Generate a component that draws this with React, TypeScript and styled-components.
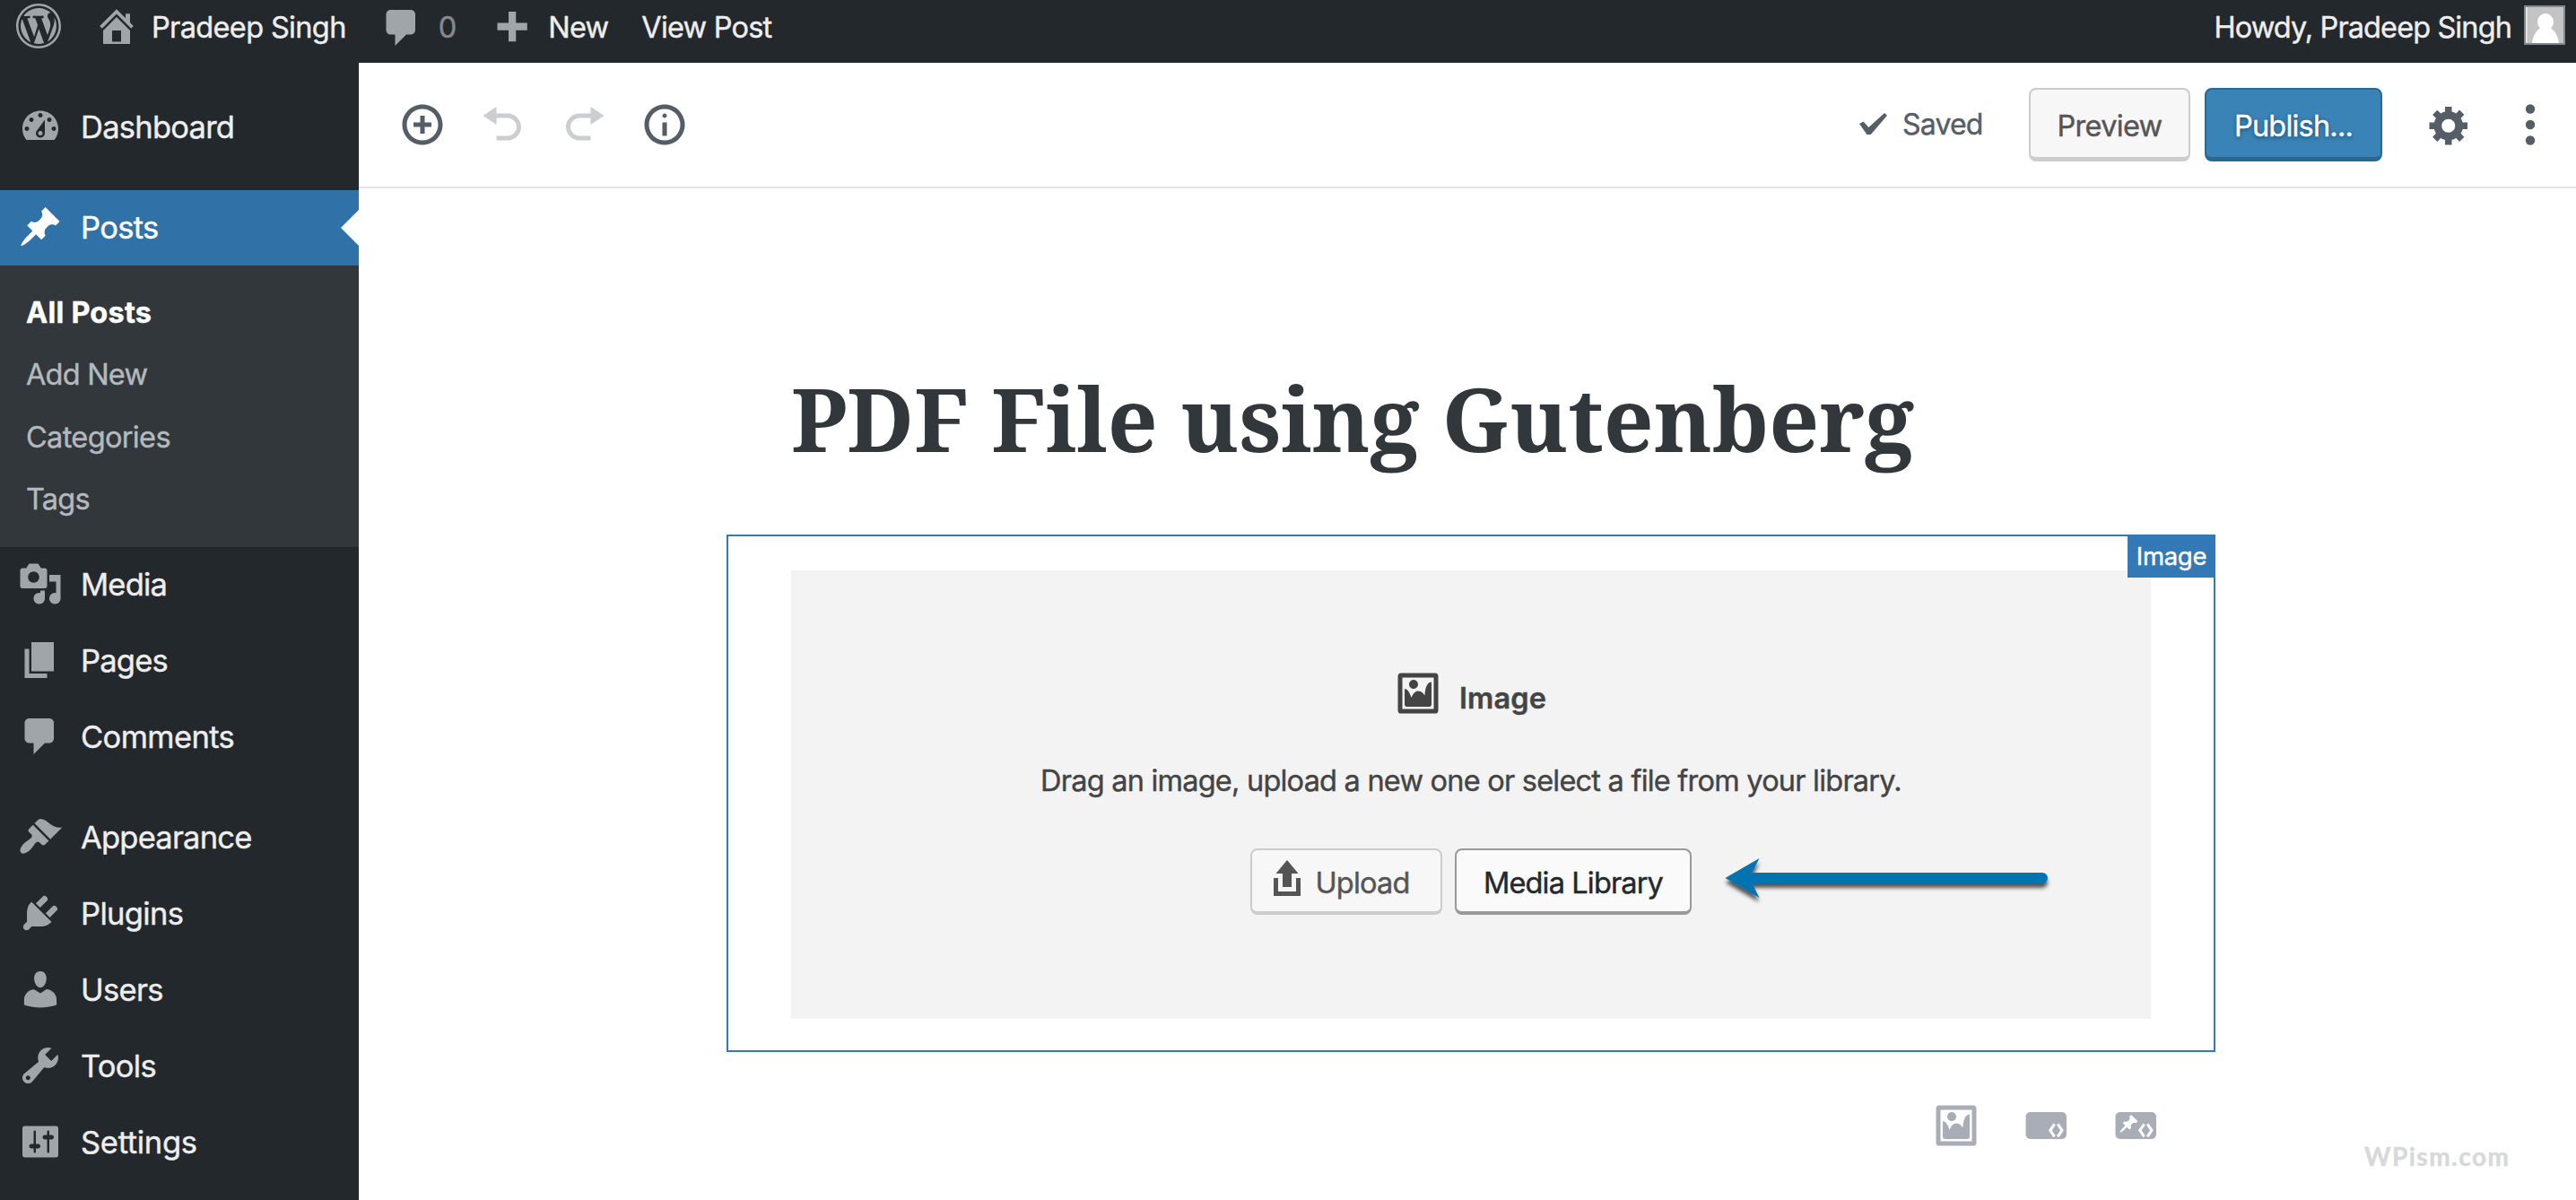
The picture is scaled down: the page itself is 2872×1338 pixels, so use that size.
import styled, { createGlobalStyle } from "styled-components";

const GlobalStyle = createGlobalStyle`
  * {
    box-sizing: border-box;
  }
  body {
    margin: 0;
    background: #fff;
    font-family: Inter, "Liberation Sans", sans-serif;
    overflow: hidden;
  }
`;

const icons = {
  wordpress:
    "M20 10c0-5.52-4.48-10-10-10S0 4.48 0 10s4.48 10 10 10 10-4.48 10-10zM10 1.01c4.97 0 8.99 4.02 8.99 8.99s-4.02 8.99-8.99 8.99S1.01 14.97 1.01 10 5.03 1.01 10 1.01zM8.01 14.82L4.96 6.61c.49-.03 1.05-.08 1.05-.08.43-.05.38-1.01-.06-.99 0 0-1.29.1-2.13.1-.15 0-.33 0-.52-.01 1.44-2.17 3.9-3.6 6.7-3.6 2.09 0 3.99.79 5.41 2.09-.6-.08-1.45.35-1.45 1.42 0 .66.38 1.22.79 1.88.31.54.5 1.22.5 2.21 0 1.34-1.27 4.48-1.27 4.48l-2.71-7.5c.48-.03.75-.16.75-.16.43-.05.38-1.1-.05-1.08 0 0-1.3.11-2.14.11-.78 0-2.11-.11-2.11-.11-.43-.02-.48 1.06-.05 1.08l.84.08 1.12 3.04zm6.02 2.15L16.64 10s.67-1.69.39-3.81c.63 1.14.94 2.42.94 3.81 0 2.96-1.56 5.58-3.94 6.97zM2.68 6.77L6.5 17.25c-2.67-1.3-4.47-4.08-4.47-7.25 0-1.16.2-2.23.65-3.23zm7.45 4.53l2.29 6.25c-.75.27-1.57.42-2.42.42-.72 0-1.41-.11-2.06-.3z",
  home: "M16 8.5l1.53 1.53-1.06 1.06L10 4.6l-6.47 6.49-1.06-1.06L10 2.5l4 4v-2h2v4zm-6-2.46l6 5.99V18H4v-5.97zM12 17v-5H8v5h4z",
  comments:
    "M5 2h9c1.1 0 2 .9 2 2v7c0 1.1-.9 2-2 2h-2l-5 5v-5H5c-1.1 0-2-.9-2-2V4c0-1.1.9-2 2-2z",
  plus: "M8.4 3.6h3.3v5h5v3.3h-5v5H8.4v-5h-5V8.6h5z",
  dashboard:
    "M3.76 16h12.48c1.1-1.37 1.76-3.11 1.76-5 0-4.42-3.58-8-8-8s-8 3.58-8 8c0 1.89.66 3.63 1.76 5zM10 4c.55 0 1 .45 1 1s-.45 1-1 1-1-.45-1-1 .45-1 1-1zM6 6c.55 0 1 .45 1 1s-.45 1-1 1-1-.45-1-1 .45-1 1-1zm8 0c.55 0 1 .45 1 1s-.45 1-1 1-1-.45-1-1 .45-1 1-1zm-5.37 5.55L12 7v6c0 1.1-.9 2-2 2s-2-.9-2-2c0-.57.24-1.08.63-1.45zM4 10c.55 0 1 .45 1 1s-.45 1-1 1-1-.45-1-1 .45-1 1-1zm12 0c.55 0 1 .45 1 1s-.45 1-1 1-1-.45-1-1 .45-1 1-1zm-5 3c0-.55-.45-1-1-1s-1 .45-1 1 .45 1 1 1 1-.45 1-1z",
  pin: "M10.44 3.02l1.82-1.82 6.36 6.35-1.83 1.82c-1.05-.68-2.48-.57-3.41.36l-.75.75c-.92.93-1.04 2.35-.35 3.41l-1.83 1.82-2.41-2.41-2.8 2.79c-.42.42-3.38 2.71-3.8 2.29s1.86-3.39 2.28-3.81l2.79-2.79L4.1 9.36l1.83-1.82c1.05.69 2.48.57 3.4-.36l.75-.75c.93-.92 1.05-2.35.36-3.41z",
  media:
    "M13 11V4c0-.55-.45-1-1-1h-1.67L9 1H5L3.67 3H2c-.55 0-1 .45-1 1v7c0 .55.45 1 1 1h10c.55 0 1-.45 1-1zM7 4.5c1.38 0 2.5 1.12 2.5 2.5S8.38 9.5 7 9.5 4.5 8.38 4.5 7 5.62 4.5 7 4.5zM14 6h5v10.5c0 1.38-1.12 2.5-2.5 2.5S14 17.88 14 16.5s1.12-2.5 2.5-2.5c.17 0 .34.02.5.05V9h-3V6zm-4 8.05V13h2v3.5c0 1.38-1.12 2.5-2.5 2.5S7 17.88 7 16.5 8.12 14 9.5 14c.17 0 .34.02.5.05z",
  page: "M6 15V2h10v13H6zm-1 1h8v2H3V5h2v11z",
  appearance:
    "M14.48 11.06L7.41 3.99l1.5-1.5c.5-.56 2.3-.47 3.51.32 1.21.8 1.43 1.28 2.91 2.1 1.18.64 2.45 1.26 4.45.85zm-.71.71L6.7 4.7 4.93 6.47c-.39.39-.39 1.02 0 1.41l1.06 1.06c.39.39.39 1.03 0 1.42-.6.6-1.43 1.11-2.21 1.69-.35.26-.7.53-1.01.84C1.43 14.23.4 16.08 1.4 17.07c.99 1 2.84-.03 4.18-1.36.31-.31.58-.66.85-1.02.57-.78 1.08-1.61 1.69-2.21.39-.39 1.02-.39 1.41 0l1.06 1.06c.39.39 1.02.39 1.41 0z",
  plugins:
    "M13.11 4.36L9.87 7.6 8 5.73l3.24-3.24c.35-.34 1.05-.2 1.56.32.52.51.66 1.21.31 1.55zm-8 1.77l.91-1.12 9.01 9.01-1.19.84c-.71.71-2.63 1.16-3.82 1.16H6.14L4.9 17.26c-.59.59-1.54.59-2.12 0-.59-.58-.59-1.53 0-2.12l1.24-1.24v-3.88c0-1.13.4-3.19 1.09-3.89zm7.26 3.97l3.24-3.24c.34-.35 1.04-.21 1.55.31.52.51.66 1.21.31 1.55l-3.24 3.25z",
  users:
    "M10 9.25c-2.27 0-2.73-3.44-2.73-3.44C7 4.02 7.82 2 9.97 2c2.16 0 2.98 2.02 2.71 3.81 0 0-.41 3.44-2.68 3.44zm0 2.57L12.72 10c2.39 0 4.52 2.33 4.52 4.53v2.49s-3.65 1.13-7.24 1.13c-3.65 0-7.24-1.13-7.24-1.13v-2.49c0-2.25 1.94-4.48 4.47-4.48z",
  tools:
    "M16.68 9.77c-1.34 1.34-3.3 1.67-4.95.99l-5.41 6.52c-.99.99-2.59.99-3.58 0s-.99-2.59 0-3.57l6.52-5.42c-.68-1.65-.35-3.61.99-4.95 1.28-1.28 3.12-1.62 4.72-1.06l-2.89 2.89 2.82 2.82 2.86-2.87c.53 1.58.18 3.39-1.08 4.65zM3.81 16.21c.4.39 1.04.39 1.43 0 .4-.4.4-1.04 0-1.43-.39-.4-1.03-.4-1.43 0-.39.39-.39 1.03 0 1.43z",
  settings:
    "M18 16V4c0-.55-.45-1-1-1H3c-.55 0-1 .45-1 1v12c0 .55.45 1 1 1h14c.55 0 1-.45 1-1zM8 11h1c.55 0 1 .45 1 1s-.45 1-1 1H8v1.5c0 .28-.22.5-.5.5s-.5-.22-.5-.5V13H6c-.55 0-1-.45-1-1s.45-1 1-1h1V5.5c0-.28.22-.5.5-.5s.5.22.5.5V11zm5-2h-1c-.55 0-1-.45-1-1s.45-1 1-1h1V5.5c0-.28.22-.5.5-.5s.5.22.5.5V7h1c.55 0 1 .45 1 1s-.45 1-1 1h-1v5.5c0 .28-.22.5-.5.5s-.5-.22-.5-.5V9z",
  insert:
    "M10 1c-5 0-9 4-9 9s4 9 9 9 9-4 9-9-4-9-9-9zm0 16c-3.9 0-7-3.1-7-7s3.1-7 7-7 7 3.1 7 7-3.1 7-7 7zm1-11H9v3H6v2h3v3h2v-3h3V9h-3V6z",
  undo: "M12 5H7V2L1 6l6 4V7h5c2.2 0 4 1.8 4 4s-1.8 4-4 4H7v2h5c3.3 0 6-2.7 6-6s-2.7-6-6-6z",
  redo: "M8 5h5V2l6 4-6 4V7H8c-2.2 0-4 1.8-4 4s1.8 4 4 4h5v2H8c-3.3 0-6-2.7-6-6s2.7-6 6-6z",
  info: "M9 15h2V9H9v6zm1-10c-.5 0-1 .5-1 1s.5 1 1 1 1-.5 1-1-.5-1-1-1zm0-4c-5 0-9 4-9 9s4 9 9 9 9-4 9-9-4-9-9-9zm0 16c-3.9 0-7-3.1-7-7s3.1-7 7-7 7 3.1 7 7-3.1 7-7 7z",
  gear: "M18 12h-2.18c-.17.7-.44 1.35-.81 1.93l1.54 1.54-2.1 2.1-1.54-1.54c-.58.36-1.23.63-1.91.79V19H8v-2.18c-.68-.16-1.33-.43-1.91-.79l-1.54 1.54-2.12-2.12 1.54-1.54c-.36-.58-.63-1.23-.79-1.91H1V9.03h2.17c.16-.7.44-1.35.8-1.94L2.43 5.55l2.1-2.1 1.54 1.54c.58-.37 1.24-.64 1.93-.81V2h3v2.18c.68.16 1.33.43 1.91.79l1.54-1.54 2.12 2.12-1.54 1.54c.36.59.64 1.24.8 1.94H18V12zm-8.5 1.5c1.66 0 3-1.34 3-3s-1.34-3-3-3-3 1.34-3 3 1.34 3 3 3z",
  image:
    "M2.25 1h15.5c.69 0 1.25.56 1.25 1.25v15.5c0 .69-.56 1.25-1.25 1.25H2.25C1.56 19 1 18.44 1 17.75V2.25C1 1.56 1.56 1 2.25 1zM17 17V3H3v14h14zM10 6c0-1.1-.9-2-2-2s-2 .9-2 2 .9 2 2 2 2-.9 2-2zm3 5s0-6 3-6v10c0 .55-.45 1-1 1H5c-.55 0-1-.45-1-1V8c2 0 3 4 3 4s1-3 3-3 3 2 3 2z",
  upload: "M8 14V8H5l5-6 5 6h-3v6H8zm-2 2v-6H4v8h12.01v-8H14v6H6z",
};

type IconName = keyof typeof icons;

const Svg = styled.svg`
  display: block;
  flex: none;
  fill: currentColor;
`;

function Icon({ name, className }: { name: IconName; className?: string }) {
  return (
    <Svg className={className} width="50" height="50" viewBox="0 0 20 20">
      <path d={icons[name]} />
    </Svg>
  );
}

const Page = styled.div`
  position: relative;
  display: flex;
  flex-direction: column;
  width: 2872px;
  height: 1338px;
  overflow: hidden;
`;

const Text = styled.span<{ $ls?: number }>`
  white-space: nowrap;
  letter-spacing: ${(p) => p.$ls ?? 0}px;
  -webkit-text-stroke: 0.4px currentColor;
`;

/* admin bar */

const AdminBar = styled.header`
  display: flex;
  align-items: flex-start;
  height: 70px;
  padding: 4px 12px 0 18px;
  background: #23282d;
  color: #eee;
  font-size: 32.5px;
  line-height: 53px;
`;

const BarItem = styled.div<{ $gap?: number }>`
  display: flex;
  gap: ${(p) => p.$gap ?? 0}px;
  margin-left: 37px;
`;

const BarIcon = styled(Icon)<{ $top?: number }>`
  margin-top: ${(p) => p.$top ?? 0}px;
  color: #a0a5aa;
`;

const Count = styled(Text)`
  color: #85898d;
`;

const Account = styled.div`
  display: flex;
  gap: 14px;
  margin-left: auto;
`;

const Avatar = styled.svg`
  display: block;
  margin-top: 2px;
`;

const Body = styled.div`
  display: flex;
  flex: 1;
  min-height: 0;
`;

/* side menu */

const Sidebar = styled.nav`
  width: 400px;
  padding-top: 30px;
  background: #23282d;
`;

const MenuGroup = styled.div`
  margin-bottom: 27px;
`;

const MenuItem = styled.div<{ $active?: boolean }>`
  position: relative;
  display: flex;
  gap: 20px;
  height: ${(p) => (p.$active ? 84 : 85)}px;
  padding: 0 20px;
  background: ${(p) => (p.$active ? "#3072a8" : "transparent")};
  color: ${(p) => (p.$active ? "#fff" : "#eee")};
  font-size: 34.5px;
  line-height: 83px;

  svg {
    margin-top: 15.5px;
    color: ${(p) => (p.$active ? "#fff" : "#a0a5aa")};
  }
`;

const Pointer = styled.span`
  position: absolute;
  right: 0;
  top: 22px;
  border: 20px solid transparent;
  border-left: 0;
  border-right-color: #fff;
`;

const SubMenu = styled.div`
  height: 314px;
  padding: 18px 29px 0;
  background: #32373c;
`;

const SubItem = styled.div<{ $current?: boolean }>`
  height: 69.25px;
  line-height: 69.25px;
  font-size: 32.5px;
  color: ${(p) => (p.$current ? "#fff" : "#b4b9be")};
  font-weight: ${(p) => (p.$current ? 700 : 400)};
`;

/* editor */

const Editor = styled.main`
  display: flex;
  flex: 1;
  flex-direction: column;
  background: #fff;
`;

const Header = styled.div`
  display: flex;
  align-items: center;
  justify-content: space-between;
  height: 140px;
  padding: 0 26px 0 46px;
  border-bottom: 2px solid #e2e4e7;
  color: #555d66;
  font-size: 32px;
`;

const Tools = styled.div`
  display: flex;
  gap: 40px;
`;

const HistoryIcon = styled(Icon)`
  opacity: 0.3;
`;

const Actions = styled.div`
  display: flex;
  align-items: center;
`;

const Saved = styled.div`
  display: flex;
  align-items: center;
  gap: 17px;
  width: 189px;
  padding-bottom: 2px;
`;

const Button = styled.button<{ $kind?: "primary" | "strong"; $w: number; $small?: boolean }>`
  display: flex;
  align-items: center;
  justify-content: center;
  width: ${(p) => p.$w}px;
  height: ${(p) => (p.$small ? 74 : 82)}px;
  padding: ${(p) => (p.$small ? 4 : 6)}px 0 0;
  border: 2px solid ${(p) => (p.$kind === "primary" ? "#2a688f" : p.$kind === "strong" ? "#999" : "#ccc")};
  border-bottom-width: ${(p) => (p.$small ? 4 : 5)}px;
  border-radius: 8px;
  background: ${(p) => (p.$kind === "primary" ? "#3a83b6" : p.$kind === "strong" ? "#fafafa" : "#f7f7f7")};
  color: ${(p) => (p.$kind === "primary" ? "#fff" : p.$kind === "strong" ? "#23282d" : "#555")};
  font: 400 32.5px Inter, "Liberation Sans", sans-serif;
  text-shadow: ${(p) => (p.$kind === "primary" ? "0 2px 4px #1c557c, 0 0 3px #2a688f" : "none")};
`;

const PublishButton = styled(Button)`
  margin: 0 50px 0 16px;
`;

const MoreIcon = styled.svg`
  display: block;
  margin-left: 40px;
  fill: currentColor;
`;

const Canvas = styled.div`
  width: 1660px;
  margin: 197px 0 0 410px;
`;

const Title = styled.h1`
  margin: 0 0 69px;
  padding-left: 72px;
  height: 120px;
  color: #32373c;
  font-family: "Noto Serif", "DejaVu Serif Condensed", "DejaVu Serif", serif;
  font-size: 97.7px;
  font-weight: 700;
  line-height: 120px;
  white-space: nowrap;
`;

const Block = styled.section`
  position: relative;
  height: 577px;
  padding: 38px 70px 0;
  border: 2px solid #3279b5;
`;

const BlockLabel = styled.span`
  position: absolute;
  top: -2px;
  right: -2px;
  width: 98px;
  height: 48px;
  background: #3279b5;
  color: #fff;
  font-size: 27.5px;
  line-height: 48px;
  text-align: center;
`;

const Placeholder = styled.div`
  position: relative;
  display: flex;
  flex-direction: column;
  align-items: center;
  height: 500px;
  padding-top: 112px;
  background: #f3f3f3;
  color: #444;
`;

const PlaceholderTitle = styled.div`
  display: flex;
  gap: 21px;
  height: 50px;
  font-size: 32.5px;
  font-weight: 600;
  line-height: 62px;
`;

const Instructions = styled.p`
  margin: 53px 0 55px;
  font-size: 32.5px;
  line-height: 40px;
`;

const ButtonRow = styled.div`
  display: flex;
  gap: 14px;
`;

const UploadIcon = styled(Icon)`
  margin: -10px 6px 0 -20px;
`;

const Arrow = styled.svg`
  position: absolute;
  left: 1036px;
  top: 311px;
`;

const Recent = styled.div`
  display: flex;
  justify-content: flex-end;
  gap: 50px;
  padding: 57px 64px 0 0;
  color: #a9adb6;
`;

const Watermark = styled.span`
  position: absolute;
  left: 2636px;
  top: 1269px;
  color: #d7d8da;
  font: 700 28px/40px Lato, sans-serif;
`;

function EmbedIcon({ pinned }: { pinned?: boolean }) {
  return (
    <Svg width="50" height="50">
      <rect x="2.5" y="10" width="45.5" height="30" rx="5" />
      {pinned && <path fill="#fff" transform="translate(6 11.5) scale(1.15)" d={icons.pin} />}
      <path
        fill="none"
        stroke="#fff"
        strokeWidth="3"
        d="M34.6 23.3l-4.8 7 4.8 7M38.200 23.3l4.8 7-4.8 7"
      />
    </Svg>
  );
}

type Entry = { icon: IconName; label: string; ls: number };

const contentMenu: Entry[] = [
  { icon: "media", label: "Media", ls: -0.8 },
  { icon: "page", label: "Pages", ls: -0.8 },
  { icon: "comments", label: "Comments", ls: -0.6 },
];

const siteMenu: Entry[] = [
  { icon: "appearance", label: "Appearance", ls: -0.8 },
  { icon: "plugins", label: "Plugins", ls: -0.65 },
  { icon: "users", label: "Users", ls: -0.7 },
  { icon: "tools", label: "Tools", ls: -0.7 },
  { icon: "settings", label: "Settings", ls: -0.3 },
];

const postsMenu = [
  { label: "All Posts", ls: 0.2 },
  { label: "Add New", ls: -0.8 },
  { label: "Categories", ls: -0.65 },
  { label: "Tags", ls: -0.8 },
];

function MenuEntries({ items }: { items: Entry[] }) {
  return (
    <>
      {items.map((item) => (
        <MenuItem key={item.label}>
          <Icon name={item.icon} />
          <Text $ls={item.ls}>{item.label}</Text>
        </MenuItem>
      ))}
    </>
  );
}

export default function App() {
  return (
    <Page>
      <GlobalStyle />
      <AdminBar>
        <BarIcon name="wordpress" />
        <BarItem $gap={14}>
          <BarIcon name="home" />
          <Text $ls={-0.65}>Pradeep Singh</Text>
        </BarItem>
        <BarItem $gap={16}>
          <BarIcon name="comments" $top={2} />
          <Count>0</Count>
        </BarItem>
        <BarItem $gap={15}>
          <BarIcon name="plus" />
          <Text $ls={-0.8}>New</Text>
        </BarItem>
        <BarItem>
          <Text $ls={-0.8}>View Post</Text>
        </BarItem>
        <Account>
          <Text $ls={-0.9}>Howdy, Pradeep Singh</Text>
          <Avatar width="46" height="44">
            <rect width="46" height="44" fill="#82878c" />
            <rect x="2" y="2" width="42" height="40" fill="#c4c4c4" />
            <rect x="2" y="2" width="1.5" height="40" fill="#eee" />
            <ellipse cx="24" cy="18.5" rx="9" ry="9.5" fill="#fff" />
            <path d="M9 42c1-9 6-16 11-17h8c5 1 10 8 11 17z" fill="#fff" />
          </Avatar>
        </Account>
      </AdminBar>
      <Body>
        <Sidebar>
          <MenuGroup>
            <MenuItem>
              <Icon name="dashboard" />
              <Text $ls={-0.75}>Dashboard</Text>
            </MenuItem>
          </MenuGroup>
          <MenuGroup>
            <MenuItem $active>
              <Icon name="pin" />
              <Text $ls={-0.7}>Posts</Text>
              <Pointer />
            </MenuItem>
            <SubMenu>
              {postsMenu.map((item, i) => (
                <SubItem key={item.label} $current={i === 0}>
                  <Text $ls={item.ls}>{item.label}</Text>
                </SubItem>
              ))}
            </SubMenu>
            <MenuEntries items={contentMenu} />
          </MenuGroup>
          <MenuEntries items={siteMenu} />
        </Sidebar>
        <Editor>
          <Header>
            <Tools>
              <Icon name="insert" />
              <HistoryIcon name="undo" />
              <HistoryIcon name="redo" />
              <Icon name="info" />
            </Tools>
            <Actions>
              <Saved>
                <Svg width="31" height="24">
                  <path d="M0 12l4.5-2.6L10.4 16 28 0l3 2.8L12.8 24H8.4z" />
                </Svg>
                <Text $ls={-0.8}>Saved</Text>
              </Saved>
              <Button $w={180}>
                <Text $ls={-0.7}>Preview</Text>
              </Button>
              <PublishButton $kind="primary" $w={198}>
                <Text $ls={-0.8}>Publish...</Text>
              </PublishButton>
              <Icon name="gear" />
              <MoreIcon width="50" height="50" viewBox="0 0 50 50">
                <circle cx="25" cy="7.5" r="5.2" />
                <circle cx="25" cy="25" r="5.2" />
                <circle cx="25" cy="42.5" r="5.2" />
              </MoreIcon>
            </Actions>
          </Header>
          <Canvas>
            <Title>PDF File using Gutenberg</Title>
            <Block>
              <Placeholder>
                <PlaceholderTitle>
                  <Icon name="image" />
                  <Text $ls={0.1}>Image</Text>
                </PlaceholderTitle>
                <Instructions>
                  <Text $ls={-0.78}>Drag an image, upload a new one or select a file from your library.</Text>
                </Instructions>
                <ButtonRow>
                  <Button $w={214} $small>
                    <UploadIcon name="upload" />
                    <Text $ls={-0.8}>Upload</Text>
                  </Button>
                  <Button $kind="strong" $w={264} $small>
                    <Text $ls={-0.85}>Media Library</Text>
                  </Button>
                </ButtonRow>
                <Arrow width="380" height="70">
                  <defs>
                    <filter id="drop" x="-5%" y="-30%" width="110%" height="190%">
                      <feDropShadow dx="0" dy="5" stdDeviation="2" floodColor="#000" floodOpacity="0.65" />
                    </filter>
                  </defs>
                  <path
                    filter="url(#drop)"
                    fill="#0073b0"
                    d="M5.5 32L43.5 10l-8 16H359a6 6 0 0 1 0 12H35.5l8 16z"
                  />
                </Arrow>
              </Placeholder>
              <BlockLabel>
                <Text $ls={-0.3}>Image</Text>
              </BlockLabel>
            </Block>
            <Recent>
              <Icon name="image" />
              <EmbedIcon />
              <EmbedIcon pinned />
            </Recent>
          </Canvas>
        </Editor>
      </Body>
      <Watermark>
        <Text $ls={1.5}>WPism.com</Text>
      </Watermark>
    </Page>
  );
}
